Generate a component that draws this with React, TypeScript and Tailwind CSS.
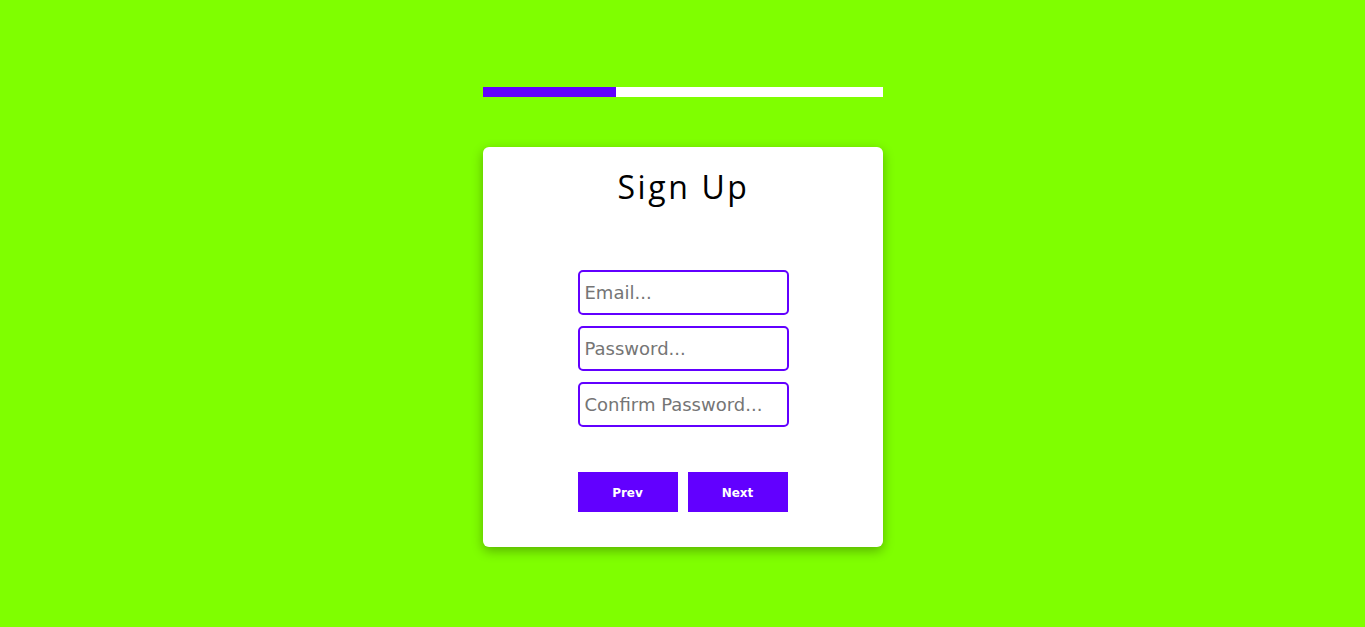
import React from "react";

export default function App() {
  return (
    <div className="min-h-[627px] w-full bg-[#7fff00] flex flex-col items-center pt-[87px]">
      <div className="w-[400px] h-[10px] bg-white flex">
        <div className="w-[133px] h-full bg-[#6200ff]" />
      </div>
      <div className="mt-[50px] w-[400px] h-[400px] bg-white rounded-[6px] shadow-[0_4px_12px_rgba(0,0,0,0.3)] flex flex-col items-center pt-[20px]">
        <h1 className="text-[32px] leading-[40px] text-black tracking-[2.6px] pl-[2px]" style={{ fontFamily: '"Open Sans", "Noto Sans", sans-serif' }}>
          Sign Up
        </h1>
        <div className="mt-[63px] flex flex-col gap-[11px] pl-[1px]">
          {["Email...", "Password...", "Confirm Password..."].map((p) => (
            <input
              key={p}
              placeholder={p}
              className="w-[211px] h-[45px] border-2 border-[#6200ff] rounded-[5px] px-[5px] text-[18px] placeholder:text-[#757575] outline-none"
              style={{ fontFamily: '"DejaVu Sans", sans-serif' }}
            />
          ))}
        </div>
        <div className="mt-[45px] flex gap-[10px]">
          {["Prev", "Next"].map((b) => (
            <button
              key={b}
              className="w-[100px] h-[40px] pt-[2px] bg-[#6200ff] text-white text-[12px] font-bold"
              style={{ fontFamily: '"DejaVu Sans", sans-serif' }}
            >
              {b}
            </button>
          ))}
        </div>
      </div>
    </div>
  );
}
